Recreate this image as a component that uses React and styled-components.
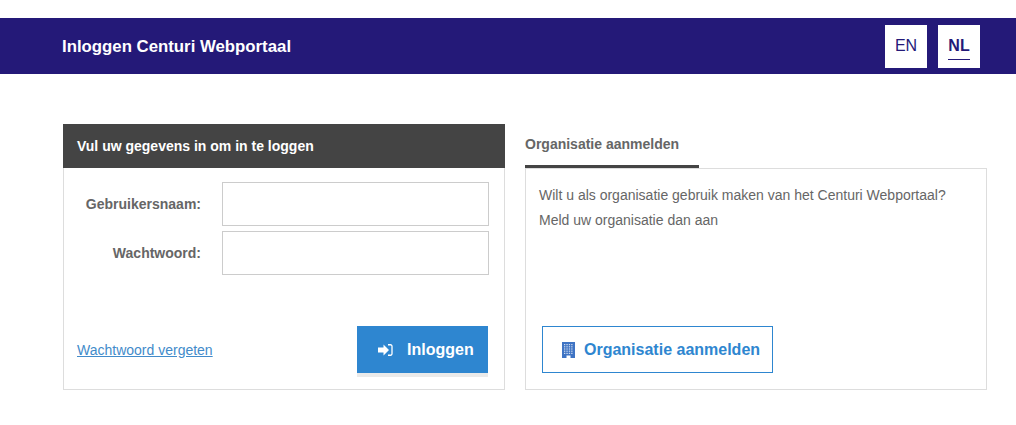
import React from 'react';
import styled, { createGlobalStyle } from 'styled-components';

const GlobalStyle = createGlobalStyle`
    html, body {
        margin: 0;
        padding: 0;
        background: #ffffff;
        font-family: "Liberation Sans", Arial, sans-serif;
        color: #666666;
    }
`;

const Page = styled.div`
    width: 1016px;
    height: 425px;
    padding-top: 18px;
    box-sizing: border-box;
    overflow: hidden;
`;
const Header = styled.header`
    height: 56px;
    background: #241978;
    display: flex;
    align-items: center;
    justify-content: space-between;
    padding: 0 36px 0 62px;
`;
const Title = styled.h1`
    margin: 2px 0 0;
    font-size: 16.8px;
    font-weight: 700;
    color: #ffffff;
`;
const LangBar = styled.div`
    display: flex;
    gap: 11px;
`;
const LangButton = styled.a`
    position: relative;
    width: 42px;
    height: 43px;
    background: #ffffff;
    color: #241978;
    font-size: 16px;
    font-weight: ${props => props.active ? 700 : 400};
    display: flex;
    align-items: center;
    justify-content: center;

    ${props => props.active && `
        &::after {
            content: "";
            position: absolute;
            left: 10px;
            right: 10px;
            bottom: 8px;
            height: 1px;
            background: #241978;
        }
    `}
`;
const Columns = styled.main`
    display: flex;
    gap: 20px;
    padding: 50px 29px 0 63px;
`;
const LoginPanel = styled.section`
    width: 442px;
    height: 266px;
    box-sizing: border-box;
    border: 1px solid #dddddd;
    border-top: 0;
    display: flex;
    flex-direction: column;
`;
const PanelHead = styled.div`
    height: 44px;
    margin: 0 -1px;
    background: #444444;
    color: #ffffff;
    font-size: 14px;
    font-weight: 700;
    line-height: 44px;
    padding-left: 14px;
`;
const Form = styled.form`
    padding: 14px 15px 0 0;
    display: flex;
    flex-direction: column;
    gap: 5px;
`;
const Row = styled.div`
    display: flex;
    align-items: center;
    justify-content: flex-end;
    gap: 21px;
`;
const Label = styled.label`
    font-size: 14px;
    font-weight: 700;
    color: #666666;
`;
const Input = styled.input`
    width: 267px;
    height: 44px;
    box-sizing: border-box;
    border: 1px solid #cccccc;
    background: #ffffff;
`;
const PanelFoot = styled.div`
    margin-top: auto;
    padding: 0 16px 12px 13px;
    display: flex;
    align-items: flex-start;
    justify-content: space-between;
`;
const ForgotLink = styled.a`
    margin-top: 16px;
    font-size: 14px;
    color: #428bca;
    text-decoration: underline;
`;
const LoginButton = styled.button`
    width: 131px;
    height: 51px;
    box-sizing: border-box;
    border: 0;
    border-bottom: 4px solid #eaeaea;
    background: #2e86d0;
    background-clip: padding-box;
    color: #ffffff;
    font-family: inherit;
    font-size: 16px;
    font-weight: 700;
    display: flex;
    align-items: center;
    gap: 14px;
    padding: 0 0 0 21px;
`;
const RightColumn = styled.section`
    width: 462px;
    display: flex;
    flex-direction: column;
`;
const Tab = styled.div`
    width: 174px;
    height: 44px;
    box-sizing: border-box;
    border-bottom: 3px solid #444444;
    color: #666666;
    font-size: 14px;
    font-weight: 700;
    line-height: 40px;
`;
const OrgPanel = styled.div`
    height: 222px;
    box-sizing: border-box;
    border: 1px solid #dddddd;
    padding: 14px 16px 16px 13px;
    display: flex;
    flex-direction: column;
`;
const Text = styled.p`
    margin: 0;
    font-size: 14px;
    line-height: 25px;
    color: #666666;
`;
const OrgButton = styled.a`
    margin: auto 0 0 3px;
    width: 231px;
    height: 47px;
    box-sizing: border-box;
    border: 1px solid #2e86d0;
    color: #2e86d0;
    font-size: 16px;
    font-weight: 700;
    text-decoration: none;
    display: flex;
    align-items: center;
    gap: 9px;
    padding-left: 19px;
`;
const BuildingIcon = styled.svg`
    width: 13px;
    height: 16px;
    flex: none;
    color: #3f74c4;
`;

function SignInIcon(){
    return (
        <svg width="15" height="12" viewBox="0 0 15 12" fill="none">
            <path d="M0 3.500h5.500V.5L11 6l-5.500 5.500v-3H0z" fill="currentColor" />
            <path d="M10 .75h2.500a1.500 1.500 0 0 1 1.500 1.500v7.500a1.500 1.500 0 0 1-1.500 1.500H10" stroke="currentColor" strokeWidth="1.300" />
        </svg>
    );
}

function Building(){
    const windows = [];
    for(let row = 0; row < 5; row++){
        for(let col = 0; col < 4; col++){
            windows.push(<rect key={row + '-' + col} x={2 + col * 2.400} y={2 + row * 2.200} width="1.300" height="1.200" fill="#ffffff" fillOpacity="0.75" />);
        }
    }
    return (
        <BuildingIcon viewBox="0 0 13 16">
            <path d="M0 0h13v16H8.500v-2.500h-4V16H0z" fill="currentColor" />
            {windows}
        </BuildingIcon>
    );
}

export default function App(){
    return (
        <Page>
            <GlobalStyle />
            <Header>
                <Title>Inloggen Centuri Webportaal</Title>
                <LangBar>
                    <LangButton>EN</LangButton>
                    <LangButton active>NL</LangButton>
                </LangBar>
            </Header>
            <Columns>
                <LoginPanel>
                    <PanelHead>Vul uw gegevens in om in te loggen</PanelHead>
                    <Form>
                        <Row>
                            <Label>Gebruikersnaam:</Label>
                            <Input type="text" />
                        </Row>
                        <Row>
                            <Label>Wachtwoord:</Label>
                            <Input type="password" />
                        </Row>
                    </Form>
                    <PanelFoot>
                        <ForgotLink href="#">Wachtwoord vergeten</ForgotLink>
                        <LoginButton type="button">
                            <SignInIcon />
                            Inloggen
                        </LoginButton>
                    </PanelFoot>
                </LoginPanel>
                <RightColumn>
                    <Tab>Organisatie aanmelden</Tab>
                    <OrgPanel>
                        <Text>Wilt u als organisatie gebruik maken van het Centuri Webportaal?</Text>
                        <Text>Meld uw organisatie dan aan</Text>
                        <OrgButton href="#">
                            <Building />
                            Organisatie aanmelden
                        </OrgButton>
                    </OrgPanel>
                </RightColumn>
            </Columns>
        </Page>
    );
}
